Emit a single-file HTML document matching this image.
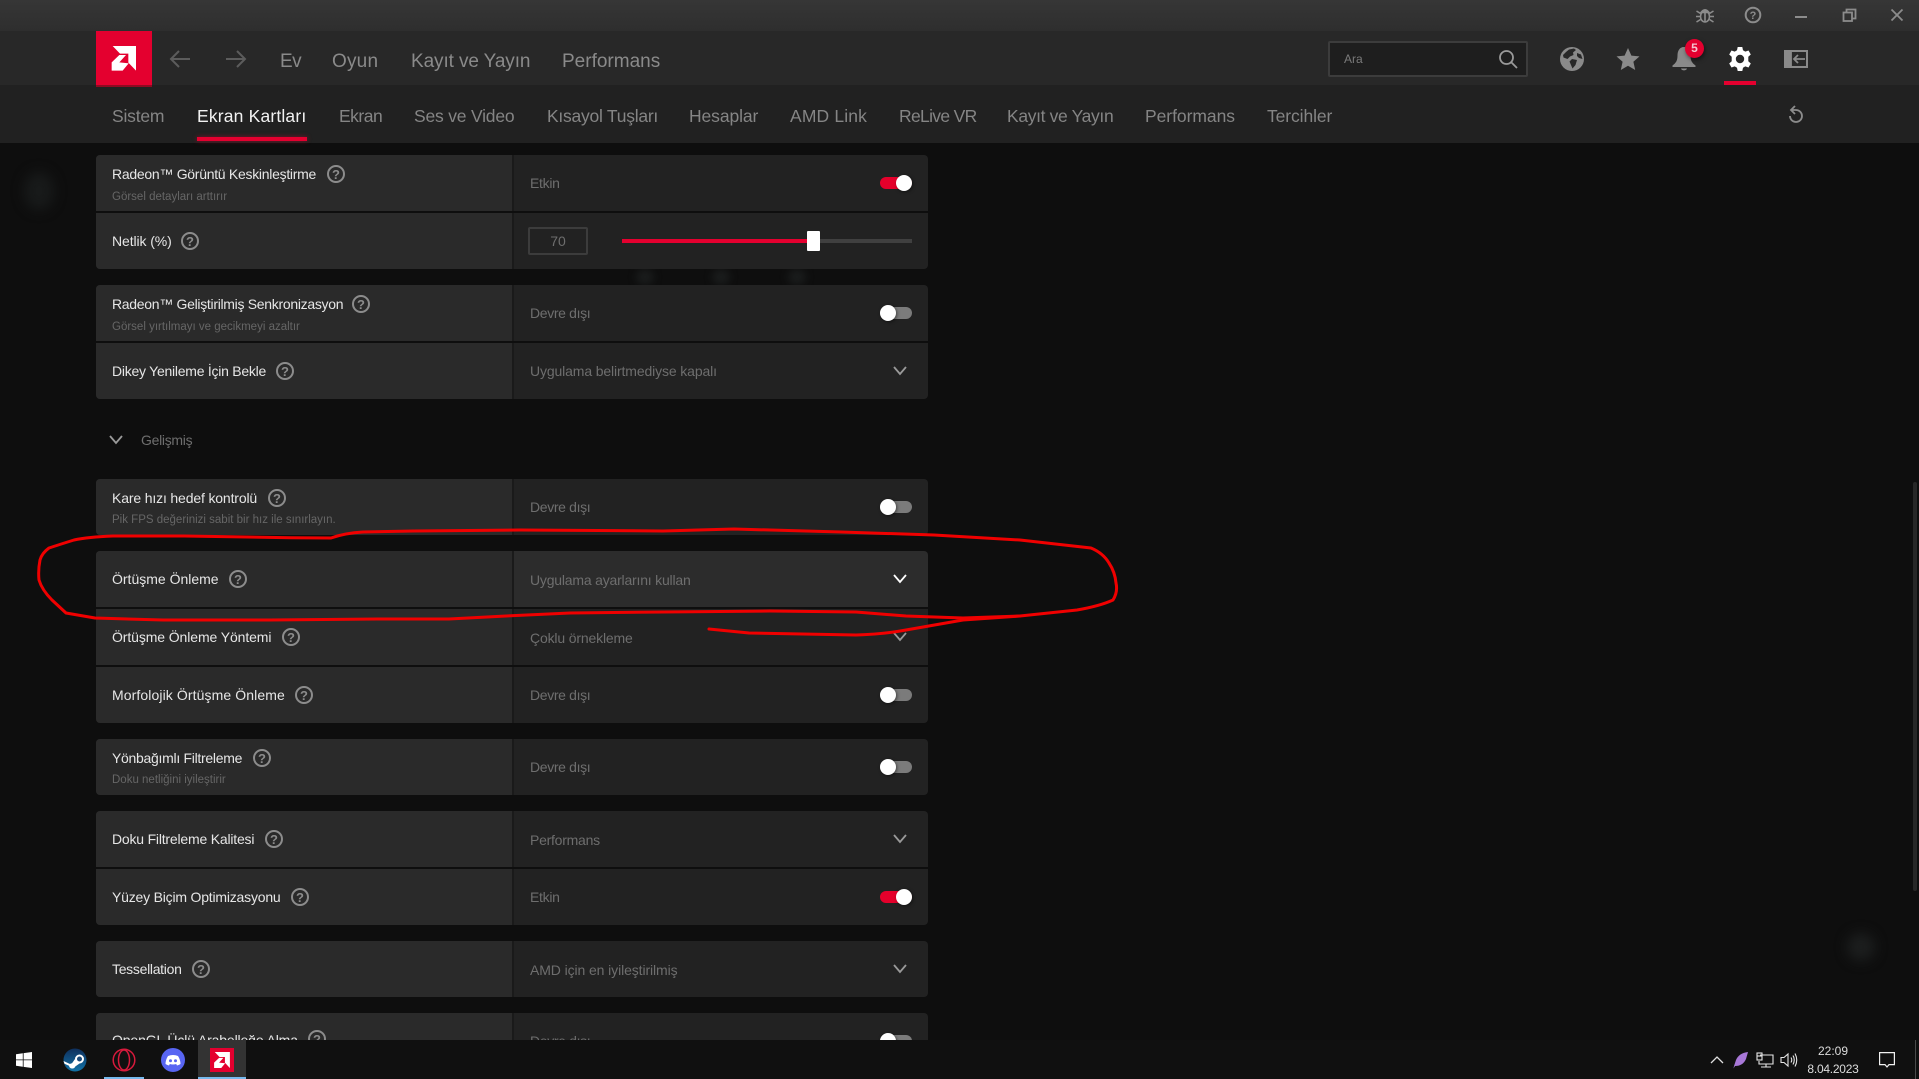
<!DOCTYPE html>
<html lang="tr"><head><meta charset="utf-8"><title>AMD Radeon Software</title>
<style>
html,body{margin:0;padding:0;background:#0e0e0e;overflow:hidden}
#p{position:relative;width:1919px;height:1079px;overflow:hidden;background:#0e0e0e;font-family:"Liberation Sans",sans-serif}
#p>*{position:absolute}
.t{position:absolute;white-space:nowrap;line-height:20px;transform:translateY(-50%)}
.nav{font-size:19px;color:#8a8a8a;top:62px}
.tab{font-size:17.5px;color:#858585;top:116px}
.c{position:absolute;left:96px;width:832px;overflow:hidden}
.r{position:absolute;left:0;width:832px;height:56px;background:#222}
.r i{position:absolute;left:0;top:0;width:416px;height:56px;background:#2a2a2a;border-right:2px solid #1a1a1a;box-sizing:content-box}
.l{font-size:14px;color:#e6e6e6}
.s{font-size:11.5px;color:#666}
.v{font-size:14px;color:#6e6e6e}
.tg{position:absolute;left:880px;width:32px;height:12px;border-radius:6px}
.tg.on{background:#e4002b}.tg.off{background:#7b7b7b}
.tg b{position:absolute;top:-2px;width:16px;height:16px;border-radius:50%;background:#fff;box-shadow:1px 1px 3px rgba(0,0,0,.5)}
.tg.on b{left:16px}.tg.off b{left:0}
.h,.d{position:absolute}
</style></head><body>
<div id="p">
<!-- bars -->
<div style="left:0;top:0;width:1919px;height:31px;background:linear-gradient(#363636,#2e2e2e)"></div>
<div style="left:0;top:31px;width:1919px;height:54px;background:#282828"></div>
<div style="left:0;top:85px;width:1919px;height:58px;background:#212121"></div>

<!-- blurred ghosts -->
<div style="left:24px;top:172px;width:30px;height:38px;background:#181a1a;border-radius:50%;filter:blur(6px)"></div>
<div style="left:636px;top:269px;width:18px;height:16px;background:#1a1c1c;border-radius:50%;filter:blur(4px)"></div>
<div style="left:712px;top:269px;width:18px;height:16px;background:#1a1c1c;border-radius:50%;filter:blur(4px)"></div>
<div style="left:788px;top:269px;width:18px;height:16px;background:#1a1c1c;border-radius:50%;filter:blur(4px)"></div>
<div style="left:1847px;top:933px;width:28px;height:28px;background:#1c1e1e;border-radius:50%;filter:blur(6px)"></div>

<!-- logo -->
<div style="left:96px;top:31px;width:56px;height:54px;background:#e4002f"></div>
<div style="left:96px;top:85px;width:56px;height:2px;background:#8f0a22"></div>
<svg style="left:96px;top:30px" width="56" height="60" viewBox="0 0 168 180"><path fill="#fff" d="M50 48H120V122L97 98V71H72ZM47 97L70 75H90L70 97L98 100L80 122H47Z"/></svg>
<svg style="left:167px;top:46px" width="26" height="26" viewBox="0 0 26 26" fill="none" stroke="#5c5c5c" stroke-width="2"><path d="M23 13H4M12 5L4 13L12 21"/></svg>
<svg style="left:223px;top:46px" width="26" height="26" viewBox="0 0 26 26" fill="none" stroke="#5c5c5c" stroke-width="2"><path d="M3 13H22M14 5L22 13L14 21"/></svg>
<span class="t nav" style="left:280px;letter-spacing:-.5px">Ev</span>
<span class="t nav" style="left:332px;letter-spacing:.2px">Oyun</span>
<span class="t nav" style="left:411px;letter-spacing:-.1px">Kayıt ve Yayın</span>
<span class="t nav" style="left:562px">Performans</span>

<!-- top right window controls -->
<svg style="left:1695px;top:5px" width="20" height="20" viewBox="0 0 20 20" fill="none" stroke="#8c8c8c" stroke-width="1.6"><ellipse cx="10" cy="11.500" rx="4.500" ry="5.500"/><path d="M6 7.500Q10 2 14 7.500ZM10 7V17M1.500 6L5.500 8.500M18.500 6L14.500 8.500M1 11.500H5.500M19 11.500H14.500M1.500 17L5.500 14.500M18.500 17L14.500 14.500" fill="#8c8c8c"/></svg>
<svg style="left:1743px;top:5px" width="20" height="20" viewBox="0 0 20 20" fill="none"><circle cx="10" cy="10" r="7.300" stroke="#8c8c8c" stroke-width="2"/><text x="10" y="14" text-anchor="middle" font-family="Liberation Sans" font-weight="bold" font-size="11" fill="#8c8c8c">?</text></svg>
<div style="left:1795px;top:16px;width:12px;height:2px;background:#8c8c8c"></div>
<svg style="left:1842px;top:8px" width="15" height="15" viewBox="0 0 15 15" fill="none" stroke="#8c8c8c" stroke-width="1.8"><rect x="1.500" y="4.500" width="8.500" height="8.500"/><path d="M4.500 4V1.500H13.500V10.500H10"/></svg>
<svg style="left:1890px;top:8px" width="14" height="14" viewBox="0 0 14 14" stroke="#8c8c8c" stroke-width="1.8"><path d="M1.500 1.500L12.500 12.500M12.500 1.500L1.500 12.500"/></svg>

<!-- search -->
<div style="left:1328px;top:41px;width:200px;height:36px;box-sizing:border-box;background:#1e1e1e;border:2px solid #3c3c3c;border-radius:2px"></div>
<span class="t" style="left:1344px;top:59px;font-size:12px;color:#7a7a7a">Ara</span>
<svg style="left:1497px;top:48px" width="22" height="22" viewBox="0 0 22 22" fill="none" stroke="#9a9a9a" stroke-width="1.800"><circle cx="9.500" cy="9.500" r="6.500"/><path d="M14.500 14.500L20 20"/></svg>

<!-- header icons -->
<svg style="left:1560px;top:47px" width="24" height="24" viewBox="0 0 24 24"><circle cx="12" cy="12" r="12" fill="#8a8a8a"/><path fill="#282828" d="M9 2.500L14 1.500L16 3L13 5.500L13.500 8L10 9.500L7.500 12L3.500 10.500L3 8L6 5ZM12 12L17 13L15.500 18L12.500 21.500L11 18L9.500 14.500ZM17 6L21 7.500L22.500 12L19 11L17 9Z"/></svg>
<svg style="left:1616px;top:47px" width="24" height="24" viewBox="0 0 24 24"><path fill="#8a8a8a" d="M12 1L15.400 8.600L23.500 9.400L17.400 14.800L19.200 23L12 18.700L4.800 23L6.600 14.800L.5 9.400L8.600 8.600Z"/></svg>
<svg style="left:1672px;top:46px" width="24" height="26" viewBox="0 0 24 26"><path fill="#8a8a8a" d="M12 1C16.500 1 18.500 5 18.500 9.500C18.500 14.500 20 17 23.500 19.500V21H.5V19.500C4 17 5.500 14.500 5.500 9.500C5.500 5 7.500 1 12 1ZM9 22.500H15C14.500 25 9.500 25 9 22.500Z"/></svg>
<div style="left:1685px;top:39px;width:19px;height:19px;border-radius:50%;background:#e4002f;box-shadow:1px 2px 4px rgba(0,0,0,.5);color:#f4c4cf;font-size:12px;font-weight:bold;line-height:19px;text-align:center">5</div>
<svg style="left:1728px;top:47px" width="24" height="24" viewBox="0 0 24 24"><path fill="#fff" fill-rule="evenodd" d="M9.700 0H14.300L15 3.300L17.300 4.600L20.500 3.500L22.800 7.500L20.300 9.800V12V14.200L22.800 16.500L20.500 20.500L17.300 19.400L15 20.700L14.300 24H9.700L9 20.700L6.700 19.400L3.500 20.500L1.200 16.500L3.700 14.200V9.800L1.200 7.500L3.500 3.500L6.700 4.600L9 3.300ZM12 7.800A4.200 4.200 0 1 0 12 16.200A4.200 4.200 0 1 0 12 7.800Z"/></svg>
<div style="left:1724px;top:81px;width:32px;height:4px;background:#e4002f"></div>
<svg style="left:1784px;top:50px" width="24" height="18" viewBox="0 0 24 18"><path fill="#8a8a8a" fill-rule="evenodd" d="M0 0H24V18H0ZM7 2V16H22V2Z"/><path fill="none" stroke="#8a8a8a" stroke-width="1.800" d="M21 9H10M14 5L10 9L14 13M7 1V17"/></svg>

<!-- tabs -->
<span class="t tab" style="left:112px;letter-spacing:-.2px">Sistem</span>
<span class="t tab" style="left:197px;color:#f2f2f2;letter-spacing:.17px">Ekran Kartları</span>
<span class="t tab" style="left:339px;letter-spacing:-.5px">Ekran</span>
<span class="t tab" style="left:414px;letter-spacing:-.2px">Ses ve Video</span>
<span class="t tab" style="left:547px;letter-spacing:-.25px">Kısayol Tuşları</span>
<span class="t tab" style="left:689px;letter-spacing:-.1px">Hesaplar</span>
<span class="t tab" style="left:790px;letter-spacing:.15px">AMD Link</span>
<span class="t tab" style="left:899px;letter-spacing:-.67px">ReLive VR</span>
<span class="t tab" style="left:1007px;letter-spacing:-.35px">Kayıt ve Yayın</span>
<span class="t tab" style="left:1145px;letter-spacing:-.05px">Performans</span>
<span class="t tab" style="left:1267px;letter-spacing:-.1px">Tercihler</span>
<div style="left:197px;top:137px;width:110px;height:4px;background:#e4002f;box-shadow:0 0 5px rgba(228,0,47,.5)"></div>
<svg style="left:1785px;top:104px" width="20" height="22" viewBox="0 0 20 22" fill="none" stroke="#8c8c8c" stroke-width="1.800"><path d="M7 6H11A6 6 0 1 1 5 12M10 2L6 6L10 10"/></svg>

<!-- cards -->
<div class="c" style="top:155px;height:114px;border-radius:4px"><div class="r" style="top:0"><i></i></div><div class="r" style="top:58px"><i></i></div></div>
<div class="c" style="top:285px;height:114px;border-radius:4px"><div class="r" style="top:0"><i></i></div><div class="r" style="top:58px"><i></i></div></div>
<div class="c" style="top:479px;height:56px;border-radius:4px"><div class="r" style="top:0"><i></i></div></div>
<div class="c" style="top:551px;height:172px;border-radius:4px"><div class="r" style="top:0;background:#2c2c2c"><i></i></div><div class="r" style="top:58px"><i></i></div><div class="r" style="top:116px"><i></i></div></div>
<div class="c" style="top:739px;height:56px;border-radius:4px"><div class="r" style="top:0"><i></i></div></div>
<div class="c" style="top:811px;height:114px;border-radius:4px"><div class="r" style="top:0"><i></i></div><div class="r" style="top:58px"><i></i></div></div>
<div class="c" style="top:941px;height:56px;border-radius:4px"><div class="r" style="top:0"><i></i></div></div>
<div class="c" style="top:1013px;height:56px;border-radius:4px"><div class="r" style="top:0"><i></i></div></div>

<!-- labels -->
<span class="t l" style="left:112px;top:174px;letter-spacing:-.28px">Radeon™ Görüntü Keskinleştirme</span>
<span class="t s" style="left:112px;top:197px">Görsel detayları arttırır</span>
<span class="t l" style="left:112px;top:241px;letter-spacing:-.1px">Netlik (%)</span>
<span class="t l" style="left:112px;top:304px;letter-spacing:-.3px">Radeon™ Geliştirilmiş Senkronizasyon</span>
<span class="t s" style="left:112px;top:327px">Görsel yırtılmayı ve gecikmeyi azaltır</span>
<span class="t l" style="left:112px;top:371px;letter-spacing:-.25px">Dikey Yenileme İçin Bekle</span>
<span class="t" style="left:141px;top:440px;font-size:14px;color:#6e6e6e;letter-spacing:-.3px">Gelişmiş</span>
<span class="t l" style="left:112px;top:498px;letter-spacing:-.15px">Kare hızı hedef kontrolü</span>
<span class="t s" style="left:112px;top:520px">Pik FPS değerinizi sabit bir hız ile sınırlayın.</span>
<span class="t l" style="left:112px;top:579px">Örtüşme Önleme</span>
<span class="t l" style="left:112px;top:637px;letter-spacing:-.1px">Örtüşme Önleme Yöntemi</span>
<span class="t l" style="left:112px;top:695px;letter-spacing:.1px">Morfolojik Örtüşme Önleme</span>
<span class="t l" style="left:112px;top:758px;letter-spacing:-.29px">Yönbağımlı Filtreleme</span>
<span class="t s" style="left:112px;top:780px">Doku netliğini iyileştirir</span>
<span class="t l" style="left:112px;top:839px;letter-spacing:-.2px">Doku Filtreleme Kalitesi</span>
<span class="t l" style="left:112px;top:897px;letter-spacing:-.2px">Yüzey Biçim Optimizasyonu</span>
<span class="t l" style="left:112px;top:969px;letter-spacing:-.3px">Tessellation</span>
<span class="t l" style="left:112px;top:1040px;letter-spacing:-.13px">OpenGL Üçlü Arabelleğe Alma</span>

<!-- values -->
<span class="t v" style="left:530px;top:183px;letter-spacing:-.3px">Etkin</span>
<span class="t v" style="left:530px;top:313px;letter-spacing:-.35px">Devre dışı</span>
<span class="t v" style="left:530px;top:371px;letter-spacing:-.13px">Uygulama belirtmediyse kapalı</span>
<span class="t v" style="left:530px;top:507px;letter-spacing:-.35px">Devre dışı</span>
<span class="t v" style="left:530px;top:580px;letter-spacing:-.2px">Uygulama ayarlarını kullan</span>
<span class="t v" style="left:530px;top:638px;letter-spacing:-.16px">Çoklu örnekleme</span>
<span class="t v" style="left:530px;top:695px;letter-spacing:-.35px">Devre dışı</span>
<span class="t v" style="left:530px;top:767px;letter-spacing:-.35px">Devre dışı</span>
<span class="t v" style="left:530px;top:840px;letter-spacing:-.25px">Performans</span>
<span class="t v" style="left:530px;top:897px;letter-spacing:-.3px">Etkin</span>
<span class="t v" style="left:530px;top:970px;letter-spacing:-.1px">AMD için en iyileştirilmiş</span>
<span class="t v" style="left:530px;top:1041px;letter-spacing:-.35px">Devre dışı</span>

<!-- toggles -->
<div class="tg on" style="top:177px"><b></b></div>
<div class="tg off" style="top:307px"><b></b></div>
<div class="tg off" style="top:501px"><b></b></div>
<div class="tg off" style="top:689px"><b></b></div>
<div class="tg off" style="top:761px"><b></b></div>
<div class="tg on" style="top:891px"><b></b></div>
<div class="tg off" style="top:1035px"><b></b></div>

<!-- slider -->
<div style="left:528px;top:227px;width:60px;height:28px;box-sizing:border-box;border:2px solid #3c3c3c;border-radius:2px;color:#6e6e6e;font-size:14px;line-height:25px;text-align:center">70</div>
<div style="left:622px;top:239px;width:290px;height:4px;background:#404040"></div>
<div style="left:622px;top:239px;width:190px;height:4px;background:#e4002f"></div>
<div style="left:807px;top:231px;width:13px;height:20px;background:#fff;border-radius:1px"></div>

<!-- chevrons -->
<svg style="left:892px;top:364px" width="16" height="14" viewBox="0 0 16 14" fill="none" stroke="#9a9a9a" stroke-width="1.800"><path d="M2 3L8 10L14 3"/></svg>
<svg style="left:108px;top:433px" width="16" height="14" viewBox="0 0 16 14" fill="none" stroke="#9a9a9a" stroke-width="1.800"><path d="M2 3L8 10L14 3"/></svg>
<svg style="left:892px;top:572px" width="16" height="14" viewBox="0 0 16 14" fill="none" stroke="#fff" stroke-width="1.800"><path d="M2 3L8 10L14 3"/></svg>
<svg style="left:892px;top:630px" width="16" height="14" viewBox="0 0 16 14" fill="none" stroke="#9a9a9a" stroke-width="1.800"><path d="M2 3L8 10L14 3"/></svg>
<svg style="left:892px;top:832px" width="16" height="14" viewBox="0 0 16 14" fill="none" stroke="#9a9a9a" stroke-width="1.800"><path d="M2 3L8 10L14 3"/></svg>
<svg style="left:892px;top:962px" width="16" height="14" viewBox="0 0 16 14" fill="none" stroke="#9a9a9a" stroke-width="1.800"><path d="M2 3L8 10L14 3"/></svg>

<!-- help icons -->
<svg width="1919" height="1079" style="left:0;top:0" fill="none" stroke="#8c8c8c" stroke-width="2" font-family="Liberation Sans" font-size="13" font-weight="bold" text-anchor="middle">
<g><circle cx="336" cy="174" r="8"/><circle cx="190" cy="241" r="8"/><circle cx="361" cy="304" r="8"/><circle cx="285" cy="371" r="8"/><circle cx="277" cy="498" r="8"/><circle cx="238" cy="579" r="8"/><circle cx="291" cy="637" r="8"/><circle cx="304" cy="695" r="8"/><circle cx="262" cy="758" r="8"/><circle cx="274" cy="839" r="8"/><circle cx="300" cy="897" r="8"/><circle cx="201" cy="969" r="8"/><circle cx="317" cy="1039" r="8"/></g>
<g fill="#8c8c8c" stroke="none"><text x="336" y="179">?</text><text x="190" y="246">?</text><text x="361" y="309">?</text><text x="285" y="376">?</text><text x="277" y="503">?</text><text x="238" y="584">?</text><text x="291" y="642">?</text><text x="304" y="700">?</text><text x="262" y="763">?</text><text x="274" y="844">?</text><text x="300" y="902">?</text><text x="201" y="974">?</text><text x="317" y="1044">?</text></g>
</svg>

<!-- scrollbar -->
<div style="left:1913px;top:482px;width:4px;height:409px;background:#272727;border-radius:2px"></div>

<!-- red hand-drawn annotation -->
<svg width="1919" height="1079" style="left:0;top:0" fill="none" stroke="#f00000" stroke-width="3" stroke-linejoin="round" stroke-linecap="round">
<path d="M331 538L291 537.700L184 536L113 536Q88 537 74 540Q58 545 49 548Q42 553 40 560Q38 570 39 580Q42 590 52 600L66 613L95 618L163 620L270 620L377 619L449 619L506 616L570 613L663 612L770 611L856 612L906 616L963 618L1020 616L1077 610Q1100 606 1113 600Q1118 592 1116 583Q1115 572 1109 563Q1103 553 1091 548L1020 540L934 535L841 532L734 529L663 531L520 530L413 531L363 532Q345 533 331 538Z"/>
<path d="M709 629L749 633L856 635Q885 634 906 630L963 620L1020 616"/>
</svg>

<!-- taskbar -->
<div style="left:0;top:1040px;width:1919px;height:39px;background:#101010"></div>
<svg style="left:16px;top:1052px" width="16" height="16" viewBox="0 0 16 16"><path fill="#fff" d="M0 2.200L6.800 1.200V7.500H0ZM7.600 1.100L16 0V7.500H7.600ZM0 8.300H6.800V14.700L0 13.800ZM7.600 8.300H16V16L7.600 14.900Z"/></svg>
<svg style="left:63px;top:1048px" width="24" height="24" viewBox="0 0 24 24"><defs><linearGradient id="st" x1="0" y1="0" x2="0" y2="1"><stop offset="0" stop-color="#0f2f5c"/><stop offset="1" stop-color="#1173a8"/></linearGradient></defs><circle cx="12" cy="12" r="11.500" fill="url(#st)"/><path fill="#fff" d="M.5 13L7 16A3.300 3.300 0 0 1 9 15.200L12 11A4.500 4.500 0 1 1 16.500 15.500L12.300 18.500A3.300 3.300 0 0 1 6 17.700L1.500 15.800Z"/><circle cx="16.500" cy="11" r="2.500" fill="#1a4a7a"/></svg>
<svg style="left:112px;top:1048px" width="24" height="24" viewBox="0 0 24 24" fill="none" stroke="#d81a3c" stroke-width="1.500"><circle cx="12" cy="12" r="10.800"/><ellipse cx="12" cy="12" rx="5.500" ry="10"/></svg>
<div style="left:104px;top:1077px;width:40px;height:2px;background:#76b9ed"></div>
<svg style="left:161px;top:1048px" width="24" height="24" viewBox="0 0 24 24"><circle cx="12" cy="12" r="12" fill="#5865f2"/><path fill="#fff" d="M7 8Q12 6 17 8Q19.500 12 19.500 16Q18 17 16 17.500L15.200 16Q12 17 8.800 16L8 17.500Q6 17 4.500 16Q4.500 12 7 8Z"/><circle cx="9.500" cy="12.700" r="1.500" fill="#5865f2"/><circle cx="14.500" cy="12.700" r="1.500" fill="#5865f2"/></svg>
<div style="left:198px;top:1040px;width:48px;height:39px;background:#333"></div>
<div style="left:198px;top:1077px;width:48px;height:2px;background:#76b9ed"></div>
<div style="left:210px;top:1048px;width:24px;height:24px;background:#e4002f"></div>
<svg style="left:214px;top:1052px" width="16" height="16" viewBox="47 48 73 74"><path fill="#fff" d="M50 48H120V122L97 98V71H72ZM47 97L70 75H90L70 97L98 100L80 122H47Z"/></svg>

<!-- tray -->
<svg style="left:1710px;top:1055px" width="14" height="10" viewBox="0 0 14 10" fill="none" stroke="#e0e0e0" stroke-width="1.300"><path d="M1 8L7 2L13 8"/></svg>
<svg style="left:1733px;top:1051px" width="16" height="18" viewBox="0 0 16 18"><path fill="#a878d8" d="M15 1Q6 2 3 9L1 15L.5 17.500L2 15Q10 15 13 8Z"/></svg>
<svg style="left:1756px;top:1052px" width="18" height="16" viewBox="0 0 18 16" fill="none" stroke="#e6e6e6" stroke-width="1.100"><path d="M4 3H17V12H3V9M10 12V15M5 15H15"/><rect x="1" y="1" width="5" height="7"/><path d="M1 4H6"/></svg>
<svg style="left:1780px;top:1052px" width="18" height="16" viewBox="0 0 18 16" fill="none" stroke="#e6e6e6" stroke-width="1.100"><path d="M1 5.500H4L8 2V14L4 10.500H1ZM11 5.500Q12.500 8 11 10.500M13 3.500Q15.500 8 13 12.500M15 1.500Q18.500 8 15 14.500"/></svg>
<span class="t" style="left:1833px;top:1051px;font-size:12px;color:#dcdcdc;transform:translate(-50%,-50%)">22:09</span>
<span class="t" style="left:1833px;top:1069px;font-size:12px;color:#dcdcdc;letter-spacing:-.25px;transform:translate(-50%,-50%)">8.04.2023</span>
<svg style="left:1879px;top:1052px" width="16" height="16" viewBox="0 0 16 16" fill="none" stroke="#f0f0f0" stroke-width="1.200"><path d="M.6 .6H15.400V12.600H10L8 15L6 12.600H.6Z"/></svg>
<div style="left:1915px;top:1040px;width:1px;height:39px;background:#4a4a4a"></div>
</div>
</body></html>
